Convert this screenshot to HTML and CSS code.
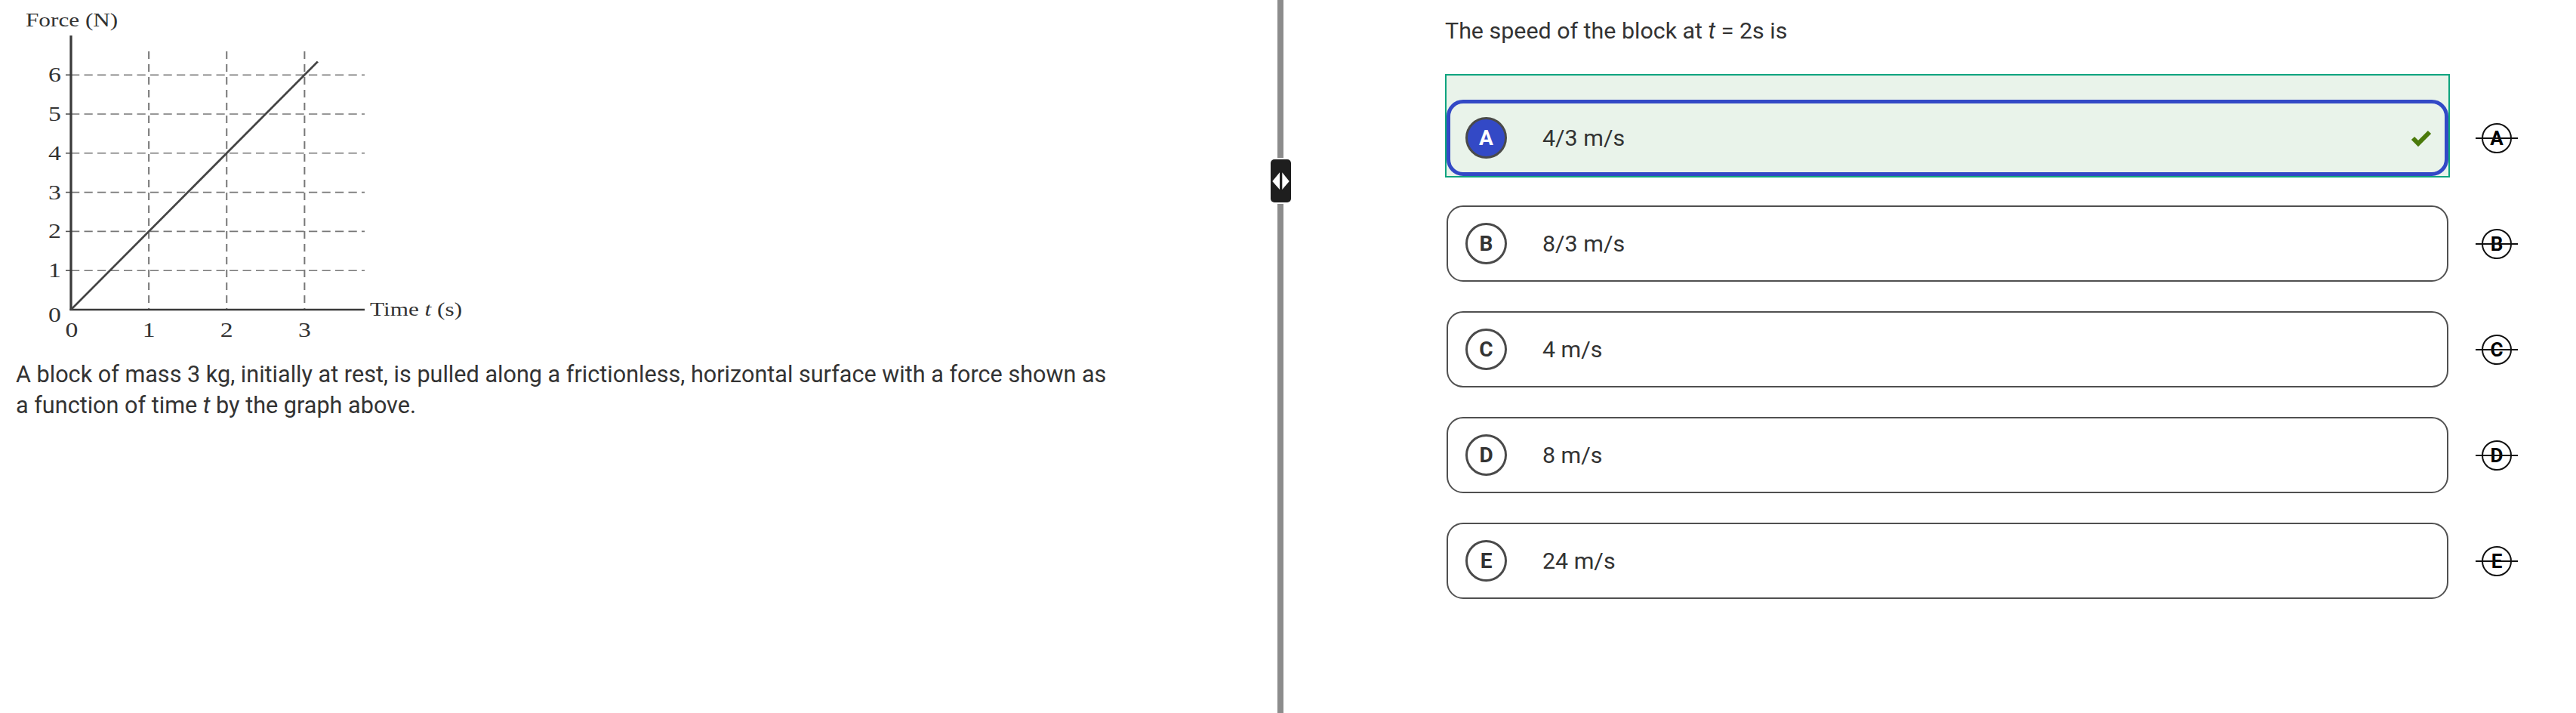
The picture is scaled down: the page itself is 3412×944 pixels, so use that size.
FILE: index.html
```html
<!DOCTYPE html>
<html lang="en">
<head>
    <title>Question 12</title>
    <meta charset="utf-8">
    <meta name="viewport" content="width=device-width, initial-scale=1.0">
    <link rel="stylesheet" href="styles.css">
</head>
<body>
    <div class="split">
        <!-- Left: stimulus -->
        <section class="stimulus-pane">
            <figure class="graph">
                <svg width="620" height="450" viewBox="16.8 8 496 450" preserveAspectRatio="none">
                    <g class="grid">
                        <line x1="75.2" y1="99.2" x2="386.4" y2="99.2"/>
                        <line x1="75.2" y1="151" x2="386.4" y2="151"/>
                        <line x1="75.2" y1="202.8" x2="386.4" y2="202.8"/>
                        <line x1="75.2" y1="254.6" x2="386.4" y2="254.6"/>
                        <line x1="75.2" y1="306.4" x2="386.4" y2="306.4"/>
                        <line x1="75.2" y1="358.2" x2="386.4" y2="358.2"/>
                        <line class="vert" x1="157.7" y1="68" x2="157.7" y2="410"/>
                        <line class="vert" x1="240.2" y1="68" x2="240.2" y2="410"/>
                        <line class="vert" x1="322.7" y1="68" x2="322.7" y2="410"/>
                    </g>
                    <g class="ticks">
                        <line x1="69.6" y1="99.2" x2="75.2" y2="99.2"/>
                        <line x1="69.6" y1="151" x2="75.2" y2="151"/>
                        <line x1="69.6" y1="202.8" x2="75.2" y2="202.8"/>
                        <line x1="69.6" y1="254.6" x2="75.2" y2="254.6"/>
                        <line x1="69.6" y1="306.4" x2="75.2" y2="306.4"/>
                        <line x1="69.6" y1="358.2" x2="75.2" y2="358.2"/>
                    </g>
                    <g class="axes">
                        <line x1="75.2" y1="47" x2="75.2" y2="411"/>
                        <line x1="74" y1="410" x2="386.4" y2="410"/>
                    </g>
                    <line class="data" x1="75.2" y1="410" x2="336.7" y2="81.6"/>
                    <g class="labels">
                        <text x="27.2" y="35">Force (N)</text>
                        <text x="392" y="418">Time <tspan font-style="italic">t</tspan> (s)</text>
                        <text class="y-num" x="64.8" y="108">6</text>
                        <text class="y-num" x="64.8" y="160">5</text>
                        <text class="y-num" x="64.8" y="212">4</text>
                        <text class="y-num" x="64.8" y="264">3</text>
                        <text class="y-num" x="64.8" y="315">2</text>
                        <text class="y-num" x="64.8" y="367">1</text>
                        <text class="y-num" x="64.8" y="426">0</text>
                        <text class="x-num" x="76" y="446">0</text>
                        <text class="x-num" x="157.7" y="446">1</text>
                        <text class="x-num" x="240.2" y="446">2</text>
                        <text class="x-num" x="322.7" y="446">3</text>
                    </g>
                </svg>
            </figure>
            <p class="stimulus">A block of mass 3 kg, initially at rest, is pulled along a frictionless, horizontal surface with a force shown as a function of time <i>t</i> by the graph above.</p>
        </section>

        <!-- Divider -->
        <div class="divider">
            <button class="divider-handle" aria-label="Resize panes">
                <svg width="27" height="57" viewBox="0 0 27 57">
                    <polygon points="2.3,29 12,17.3 12,40" fill="#fff"/>
                    <polygon points="15.3,17.3 15.3,40 24.7,29" fill="#fff"/>
                </svg>
            </button>
        </div>

        <!-- Right: question -->
        <section class="question-pane">
            <p class="stem">The speed of the block at <i>t</i> = 2s is</p>
            <ul class="choices">
                <li class="choice-row">
                    <div class="choice-wrap correct">
                        <div class="choice selected">
                            <span class="letter">A</span>
                            <span class="answer">4/3 m/s</span>
                            <svg class="check" width="28" height="22" viewBox="0 0 28 22">
                                <polyline points="3,11 10,18 25,3" fill="none" stroke="#4b7a0b" stroke-width="6"/>
                            </svg>
                        </div>
                    </div>
                    <button class="eliminate"><span>A</span></button>
                </li>
                <li class="choice-row">
                    <div class="choice-wrap">
                        <div class="choice">
                            <span class="letter">B</span>
                            <span class="answer">8/3 m/s</span>
                        </div>
                    </div>
                    <button class="eliminate"><span>B</span></button>
                </li>
                <li class="choice-row">
                    <div class="choice-wrap">
                        <div class="choice">
                            <span class="letter">C</span>
                            <span class="answer">4 m/s</span>
                        </div>
                    </div>
                    <button class="eliminate"><span>C</span></button>
                </li>
                <li class="choice-row">
                    <div class="choice-wrap">
                        <div class="choice">
                            <span class="letter">D</span>
                            <span class="answer">8 m/s</span>
                        </div>
                    </div>
                    <button class="eliminate"><span>D</span></button>
                </li>
                <li class="choice-row">
                    <div class="choice-wrap">
                        <div class="choice">
                            <span class="letter">E</span>
                            <span class="answer">24 m/s</span>
                        </div>
                    </div>
                    <button class="eliminate"><span>E</span></button>
                </li>
            </ul>
        </section>
    </div>
</body>
</html>
```

FILE: styles.css
```css
/* General styles */
body {
    margin: 0;
    font-family: Roboto, 'Liberation Sans', sans-serif;
    color: #333;
    background: #fff;
}

.split {
    display: flex;
    height: 100vh;
}

/* Left pane */
.stimulus-pane {
    width: 1692px;
    box-sizing: border-box;
    padding: 8px 21px 0 21px;
}

.graph {
    margin: 0;
}

.graph svg {
    display: block;
}

.grid line {
    stroke: #777;
    stroke-width: 1.6;
    stroke-dasharray: 9 5;
}

.grid .vert {
    stroke-dasharray: 10 7;
}

.ticks line {
    stroke: #555;
    stroke-width: 1.6;
}

.axes line {
    stroke: #3a3a3a;
    stroke-width: 2.6;
}

.data {
    stroke: #444;
    stroke-width: 2.4;
}

.labels text {
    font-family: 'Liberation Serif', 'DejaVu Serif', serif;
    font-size: 25px;
    fill: #333;
}

.labels .y-num,
.labels .x-num {
    font-size: 27px;
}

.labels .y-num {
    text-anchor: end;
}

.labels .x-num {
    text-anchor: middle;
}

.stimulus {
    margin: 17px 0 0 0;
    max-width: 1452px;
    font-size: 30.6px;
    line-height: 41px;
}

/* Divider */
.divider {
    position: relative;
    width: 8px;
    background: #8c8c8c;
}

.divider-handle {
    position: absolute;
    top: 211px;
    left: -9px;
    width: 27px;
    height: 57px;
    padding: 0;
    border: none;
    border-radius: 5px;
    background: #1e1e1e;
    box-shadow: 0 0 0 2px #fff;
}

.divider-handle svg {
    display: block;
}

/* Right pane */
.question-pane {
    flex: 1;
    padding: 20px 77px 0 214px;
}

.stem {
    margin: 0;
    font-size: 30.4px;
    line-height: 42px;
}

.choices {
    list-style: none;
    margin: 36px 0 0 0;
    padding: 0;
    display: flex;
    flex-direction: column;
    gap: 3px;
}

.choice-row {
    display: flex;
    align-items: flex-end;
    gap: 34px;
}

.choice-wrap {
    flex: 1;
    padding-top: 32px;
    border: 2px solid transparent;
}

.choice-wrap.correct {
    border-color: #0fa47f;
    background: #e9f3ea;
}

.choice {
    display: flex;
    align-items: center;
    box-sizing: border-box;
    height: 101px;
    padding: 0 17px 0 23px;
    border: 2px solid #505050;
    border-radius: 22px;
    background: #fff;
}

.choice.selected {
    padding-left: 20px;
    border: 5px solid #3349c6;
    background: #e9f3ea;
}

.letter {
    display: flex;
    align-items: center;
    justify-content: center;
    flex-shrink: 0;
    width: 55px;
    height: 55px;
    box-sizing: border-box;
    border: 3px solid #4a4a4a;
    border-radius: 50%;
    font-size: 28px;
    font-weight: bold;
    color: #333;
}

.selected .letter {
    background: #3349c6;
    color: #fff;
}

.answer {
    margin-left: 47px;
    font-size: 30.4px;
}

.check {
    margin-left: auto;
}

/* Eliminate buttons */
.eliminate {
    position: relative;
    display: flex;
    align-items: center;
    justify-content: center;
    width: 56px;
    height: 101px;
    margin-bottom: 2px;
    padding: 0;
    border: none;
    background: none;
    font-family: Roboto, 'Liberation Sans', sans-serif;
}

.eliminate span {
    display: flex;
    align-items: center;
    justify-content: center;
    width: 40px;
    height: 40px;
    box-sizing: border-box;
    border: 2px solid #111;
    border-radius: 50%;
    font-size: 26px;
    font-weight: bold;
    color: #000;
}

.eliminate::after {
    content: "";
    position: absolute;
    left: 0;
    right: 0;
    top: 50%;
    height: 2px;
    margin-top: -1px;
    background: #111;
}
```
